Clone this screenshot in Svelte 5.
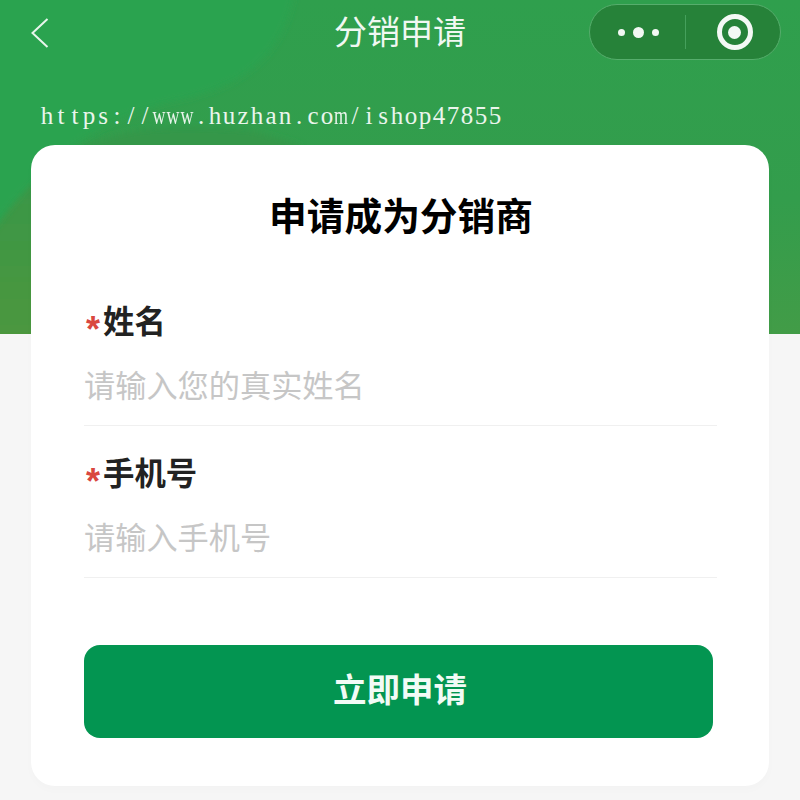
<script>
  let name = '';
  let phone = '';

  const url = 'https://www.huzhan.com/ishop47855';
</script>

<main class="page">
  <svg class="backdrop" width="800" height="334" viewBox="0 0 800 334" aria-hidden="true">
    <defs>
      <linearGradient id="base" x1="0" y1="0" x2="0" y2="1">
        <stop offset="0" stop-color="#2f9f4d" />
        <stop offset="0.6" stop-color="#339d4c" />
        <stop offset="1" stop-color="#429c47" />
      </linearGradient>
      <linearGradient id="dark" x1="0" y1="0" x2="0" y2="1">
        <stop offset="0" stop-color="#33974a" />
        <stop offset="1" stop-color="#4d973e" />
      </linearGradient>
      <filter id="soft" x="-10%" y="-10%" width="120%" height="120%">
        <feGaussianBlur stdDeviation="3" />
      </filter>
    </defs>
    <rect width="800" height="334" fill="url(#base)" />
    <path d="M-10 344 V225 C50 150 110 115 250 130 L300 145 V344 Z" fill="url(#dark)" filter="url(#soft)" />
    <path d="M-10 -10 H295 C285 50 250 85 180 100 C110 115 50 150 -10 235 Z" fill="#29a350" filter="url(#soft)" />
  </svg>

  <header class="nav">
    <svg class="back" width="18" height="30" viewBox="0 0 18 30" fill="none">
      <path d="M16.5 1 L1.5 15 L16.5 29" stroke="#e8f5ec" stroke-width="2" />
    </svg>
    <h2 class="nav-title">分销申请</h2>
    <div class="capsule">
      <div class="dots">
        <span class="dot"></span>
        <span class="dot big"></span>
        <span class="dot"></span>
      </div>
      <span class="divider"></span>
      <div class="target"><span></span></div>
    </div>
  </header>

  <p class="url">{#each url as ch}<span class:wide={ch === 'w' || ch === 'm'}>{ch}</span>{/each}</p>

  <section class="card">
    <h1>申请成为分销商</h1>

    <form on:submit|preventDefault class="form">
      <div class="field">
        <label for="name"><span class="star">*</span>姓名</label>
        <input id="name" bind:value={name} placeholder="请输入您的真实姓名" />
      </div>

      <div class="field">
        <label for="phone"><span class="star">*</span>手机号</label>
        <input id="phone" bind:value={phone} placeholder="请输入手机号" />
      </div>

      <button type="submit">立即申请</button>
    </form>
  </section>
</main>

<style>
  :global(body) {
    background: #f6f6f6;
  }

  .page {
    position: relative;
    height: 800px;
    overflow: hidden;
    box-sizing: border-box;
    font-family: "Noto Sans CJK SC", "Noto Sans", sans-serif;
  }

  .backdrop {
    position: absolute;
    left: 0;
    top: 0;
    display: block;
  }

  /* Top bar */
  .nav {
    position: relative;
    height: 64px;
    display: flex;
    align-items: center;
    justify-content: center;
  }

  .back {
    position: absolute;
    left: 31px;
    top: 18px;
  }

  .nav-title {
    margin: 0;
    padding-bottom: 4px;
    font-size: 33px;
    font-weight: 400;
    line-height: 60px;
    color: #f0f8f2;
  }

  .capsule {
    position: absolute;
    left: 589px;
    top: 4px;
    width: 192px;
    height: 56px;
    box-sizing: border-box;
    display: grid;
    grid-template-columns: 95px 1px 1fr;
    align-items: center;
    border: 1px solid #56ad6c;
    border-radius: 28px;
    background: #268239;
  }

  .dots {
    display: flex;
    justify-content: center;
    align-items: center;
    gap: 8px;
    padding-left: 1px;
  }

  .dot {
    width: 7px;
    height: 7px;
    border-radius: 50%;
    background: #f2f8f3;
  }

  .dot.big {
    width: 11px;
    height: 11px;
  }

  .divider {
    height: 34px;
    background: #45a05c;
  }

  .target {
    justify-self: center;
    width: 36px;
    height: 36px;
    margin-left: 3px;
    box-sizing: border-box;
    display: flex;
    align-items: center;
    justify-content: center;
    border: 5px solid #f4f9f5;
    border-radius: 50%;
  }

  .target span {
    width: 13px;
    height: 13px;
    border-radius: 50%;
    background: #f4f9f5;
  }

  .url {
    position: relative;
    display: flex;
    margin: 0;
    padding: 36px 0 0 40px;
    height: 45px;
    font-family: "Liberation Serif", serif;
    font-size: 25px;
    line-height: 32px;
    color: #eaf5ec;
  }

  .url span {
    flex: 0 0 14px;
    min-width: 0;
    display: flex;
    justify-content: center;
  }

  .url span.wide {
    transform: scaleX(0.72);
  }

  /* Form card */
  .card {
    position: relative;
    margin: 0 31px;
    height: 641px;
    box-sizing: border-box;
    padding: 44px 53px 0;
    background: #fff;
    border-radius: 24px;
    box-shadow: 0 4px 10px rgba(0, 0, 0, 0.015);
  }

  h1 {
    margin: 0;
    padding-left: 2px;
    text-align: center;
    font-size: 37.7px;
    line-height: 50px;
    font-weight: 700;
    color: #000;
  }

  .form {
    display: flex;
    flex-direction: column;
    margin-top: 59px;
  }

  .field {
    display: flex;
    flex-direction: column;
    height: 152px;
    margin-right: -1px;
    box-sizing: border-box;
  }

  label {
    display: flex;
    align-items: center;
    height: 42px;
    font-size: 31.4px;
    font-weight: 700;
    color: #222;
  }

  .star {
    width: 19px;
    padding-left: 2px;
    box-sizing: border-box;
    font-family: "Liberation Sans", sans-serif;
    font-size: 36px;
    font-weight: 700;
    line-height: 30px;
    transform: translateY(11px);
    color: #d9473f;
  }

  input {
    height: 84px;
    margin-top: 1px;
    padding: 0;
    border: 0;
    border-bottom: 1px solid #f0f0f0;
    outline: none;
    font-family: inherit;
    font-size: 31.2px;
    background: transparent;
    color: #222;
  }

  input::placeholder {
    color: #c6c6c6;
    opacity: 1;
  }

  button {
    height: 93px;
    width: 629px;
    margin: 43px 0 0;
    padding: 0 0 8px 3px;
    border: none;
    border-radius: 16px;
    background: #039551;
    color: #f2fbf6;
    font-family: inherit;
    font-size: 33.5px;
    font-weight: 700;
  }
</style>
